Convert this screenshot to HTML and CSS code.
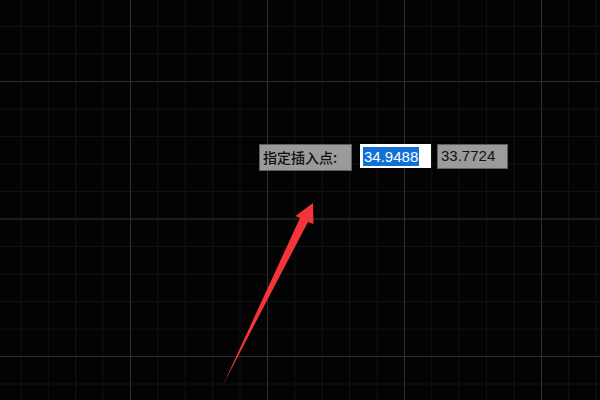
FILE: index.html
```html
<!DOCTYPE html>
<html lang="zh-CN">
<head>
  <meta charset="UTF-8">
  <meta name="viewport" content="width=device-width, initial-scale=1.0">
  <title>指定插入点</title>
  <link rel="stylesheet" href="styles.css">
</head>
<body>
  <div class="canvas">
    <!-- 动态输入提示 -->
    <div class="prompt">
      <div class="prompt-label">指定插入点:</div>
      <div class="prompt-input"><span class="selected">34.9488</span></div>
      <div class="prompt-value">33.7724</div>
    </div>

    <!-- 红色箭头 -->
    <svg class="arrow" width="600" height="400" viewBox="0 0 600 400">
      <polygon points="313,203 313.5,224 308,222 223,385 300,218 295.5,216" fill="#f43538"/>
    </svg>
  </div>
</body>
</html>
```

FILE: styles.css
```css
html, body {
  margin: 0;
  padding: 0;
}
body {
  background: #030304;
}
.canvas {
  position: relative;
  width: 600px;
  height: 400px;
  overflow: hidden;
  background-color: #030304;
  background-image:
    linear-gradient(to right, #2c2c3a 1px, transparent 1px),
    linear-gradient(to bottom, #2c2c3a 1px, transparent 1px),
    linear-gradient(to right, #111118 1px, transparent 1px),
    linear-gradient(to bottom, #111118 1px, transparent 1px);
  background-size:
    137px 100%,
    100% 137.5px,
    27.4px 100%,
    100% 27.5px;
  background-position:
    130px 0,
    0 81px,
    20.4px 0,
    0 26px;
}

.prompt {
  position: absolute;
  left: 259px;
  top: 144px;
  display: flex;
  align-items: flex-start;
  gap: 6px;
}
.prompt-label {
  box-sizing: border-box;
  width: 93px;
  height: 27px;
  padding: 0 0 0 3px;
  background: #9b9b9b;
  border: 1px solid #5e5e5e;
  color: #111111;
  font-family: "Noto Sans CJK SC", sans-serif;
  font-size: 14px;
  font-weight: 500;
  line-height: 24px;
}
.prompt-input {
  box-sizing: border-box;
  width: 71px;
  height: 24px;
  margin-left: 2px;
  padding: 3px 0 0 3px;
  background: #ffffff;
  font-family: "Liberation Sans", Arial, sans-serif;
  font-size: 15px;
}
.selected {
  display: inline-block;
  height: 19px;
  line-height: 19px;
  padding: 0 1px;
  background: #1170d8;
  color: #ffffff;
}
.prompt-value {
  box-sizing: border-box;
  width: 71px;
  height: 25px;
  padding: 1px 0 0 3px;
  background: #9b9b9b;
  border: 1px solid #5e5e5e;
  color: #111111;
  font-family: "Liberation Sans", Arial, sans-serif;
  font-size: 15px;
  line-height: 20px;
}

.arrow {
  position: absolute;
  left: 0;
  top: 0;
}
```
